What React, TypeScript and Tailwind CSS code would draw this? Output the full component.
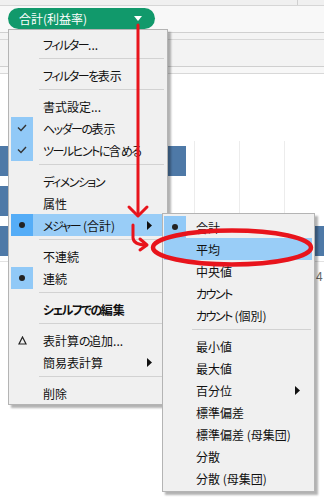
type Mark = "check" | "dot" | "delta";

type Item =
  | { sep: true }
  | {
      sep?: false;
      label: string;
      mark?: Mark;
      active?: boolean;
      strong?: boolean;
      arrow?: boolean;
    };

const mainItems: Item[] = [
  { label: "フィルター..." },
  { sep: true },
  { label: "フィルターを表示" },
  { sep: true },
  { label: "書式設定..." },
  { label: "ヘッダーの表示", mark: "check" },
  { label: "ツールヒントに含める", mark: "check" },
  { sep: true },
  { label: "ディメンション" },
  { label: "属性" },
  { label: "メジャー (合計)", mark: "dot", active: true, arrow: true },
  { sep: true },
  { label: "不連続" },
  { label: "連続", mark: "dot" },
  { sep: true },
  { label: "シェルフでの編集", strong: true },
  { sep: true },
  { label: "表計算の追加...", mark: "delta" },
  { label: "簡易表計算", arrow: true },
  { sep: true },
  { label: "削除" },
];

const subItems: Item[] = [
  { label: "合計", mark: "dot" },
  { label: "平均", active: true },
  { label: "中央値" },
  { label: "カウント" },
  { label: "カウント (個別)" },
  { sep: true },
  { label: "最小値" },
  { label: "最大値" },
  { label: "百分位", arrow: true },
  { label: "標準偏差" },
  { label: "標準偏差 (母集団)" },
  { label: "分散" },
  { label: "分散 (母集団)" },
];

// the menu font squeezes kana narrower than kanji
function Label({ text }: { text: string }) {
  const parts = text.split(/([\u3040-\u30ff]+)/);
  return (
    <>
      {parts.map((p, i) =>
        /[\u3040-\u30ff]/.test(p) ? (
          <span key={i} className="tracking-[-1.5px]">
            {p}
          </span>
        ) : (
          <span key={i}>{p}</span>
        ),
      )}
    </>
  );
}

function MarkIcon({ mark }: { mark?: Mark }) {
  if (mark === "check")
    return (
      <svg width="10" height="8" viewBox="0 0 10 8">
        <path d="M1 3.5 L4 6.5 L9 1" fill="none" stroke="#333" strokeWidth="1.4" />
      </svg>
    );
  if (mark === "dot") return <div className="h-[6px] w-[6px] rounded-full bg-[#222]" />;
  if (mark === "delta")
    return (
      <svg width="9" height="9" viewBox="0 0 9 9">
        <path d="M4.5 1 L8 8 L1 8 Z" fill="none" stroke="#222" strokeWidth="1.2" />
      </svg>
    );
  return null;
}

function Arrow() {
  return (
    <svg width="5" height="9" viewBox="0 0 5 9" className="shrink-0">
      <path d="M0 0 L5 4.5 L0 9 Z" fill="#111" />
    </svg>
  );
}

function Menu({ items, sub }: { items: Item[]; sub?: boolean }) {
  return (
    <div className="flex flex-col">
      {items.map((it, i) => {
        if (it.sep)
          return (
            <div
              key={i}
              className={
                sub
                  ? "mt-[3px] mb-[5px] ml-[29px] mr-[3px] h-px bg-[#d2d2d2]"
                  : "mt-[3px] mb-[5px] ml-[30px] mr-[3px] h-px bg-[#d2d2d2]"
              }
            />
          );
        const rowBg = it.active ? "bg-[#99cdf7]" : "";
        let cellBg = "";
        if (it.mark === "check" || it.mark === "dot") cellBg = "bg-[#91c9f7]";
        if (it.active && !sub) cellBg = "bg-[#55adf7]";
        return (
          <div
            key={i}
            className={`flex h-[22px] items-center ${sub ? "ml-[1px] mr-[2px]" : "mx-[2px]"} ${rowBg}`}
          >
            <div className={`flex h-full w-[22px] shrink-0 items-center justify-center ${cellBg}`}>
              <MarkIcon mark={it.mark} />
            </div>
            <div
              className={`flex-1 whitespace-nowrap pl-[10px] pt-[2px] text-[12px] leading-[20px] text-[#111] ${it.strong ? "font-bold" : ""}`}
            >
              <Label text={it.label} />
            </div>
            {it.arrow && (
              <div className={sub ? "mr-[12px]" : "mr-[13px]"}>
                <Arrow />
              </div>
            )}
          </div>
        );
      })}
    </div>
  );
}

export default function App() {
  return (
    <div className="relative h-[503px] w-[324px] overflow-hidden bg-white font-['Noto_Sans_CJK_JP','Noto_Sans',sans-serif] [font-feature-settings:'palt']">
      {/* shelf header */}
      <div className="h-[6px] border-b border-[#d6d6d6] bg-[#f0f0f0] pl-[297px]">
        <div className="h-full w-px bg-[#d0d0d0]" />
      </div>
      <div className="h-[27px] border-b border-[#d0d0d0] bg-[#f8f8f8] pl-[8px] pt-[2px]">
        <div className="flex h-[21px] w-[147px] items-center justify-between rounded-full bg-[#11996b] pl-[11px] pr-[13px]">
          <span className="text-[12px] leading-none text-white">合計(利益率)</span>
          <svg width="8" height="5" viewBox="0 0 8 5">
            <path d="M0 0 L8 0 L4 5 Z" fill="#fff" />
          </svg>
        </div>
      </div>
      <div className="h-[7px] border-b border-[#d8d8d8] bg-[#f4f4f4]" />
      <div className="h-[27px] border-b border-[#cfcfcf] bg-[#f3f3f3]" />
      <div className="h-[7px] border-b border-[#d8d8d8] bg-[#f7f7f7]" />

      {/* chart */}
      <div className="relative mt-[67px] border-b border-[#e2e2e2]">
        <div className="absolute top-0 bottom-0 left-[194px] w-px bg-[#ececec]" />
        <div className="absolute top-0 bottom-0 left-[239px] w-px bg-[#ececec]" />
        <div className="absolute top-0 bottom-0 left-[284px] w-px bg-[#ececec]" />
        <div className="relative flex h-[40px] items-center">
          <div className="h-[30px] w-[186px] bg-[#4e79a7]" />
        </div>
        <div className="relative flex h-[40px] items-center">
          <div className="h-[30px] w-[165px] bg-[#4e79a7]" />
        </div>
        <div className="relative flex h-[40px] items-center">
          <div className="h-[30px] w-full bg-[#4e79a7]" />
        </div>
      </div>
      <div className="mt-[6px] pl-[316px] text-[12px] leading-[16px] text-[#666]">4</div>

      {/* context menu */}
      <div className="absolute left-[8px] top-[29px] w-[160px] border border-[#b4b4b4] bg-[#f0f0f0] pt-[3px] shadow-[3px_3px_2px_rgba(0,0,0,0.3)]">
        <Menu items={mainItems} />
      </div>

      {/* submenu */}
      <div className="absolute left-[162px] top-[213px] w-[153px] border border-[#b4b4b4] bg-[#f0f0f0] pt-[2px] pb-[2px] shadow-[3px_3px_2px_rgba(0,0,0,0.3)]">
        <Menu items={subItems} sub />
      </div>

      {/* red annotations */}
      <svg className="pointer-events-none absolute left-0 top-0" width="324" height="503" viewBox="0 0 324 503">
        <g fill="none" stroke="#e8141c" strokeWidth="3" strokeLinecap="round" strokeLinejoin="round">
          <path d="M138 25 L138 215" />
          <path d="M129 207 L138 216 L147 207" />
          <path d="M133 225 L133 238 Q134 245 146 245" />
          <path d="M140 239 L147 245 L140 250" />
        </g>
        <ellipse cx="232" cy="247.5" rx="79" ry="17" fill="none" stroke="#e8141c" strokeWidth="4.5" />
      </svg>
    </div>
  );
}
